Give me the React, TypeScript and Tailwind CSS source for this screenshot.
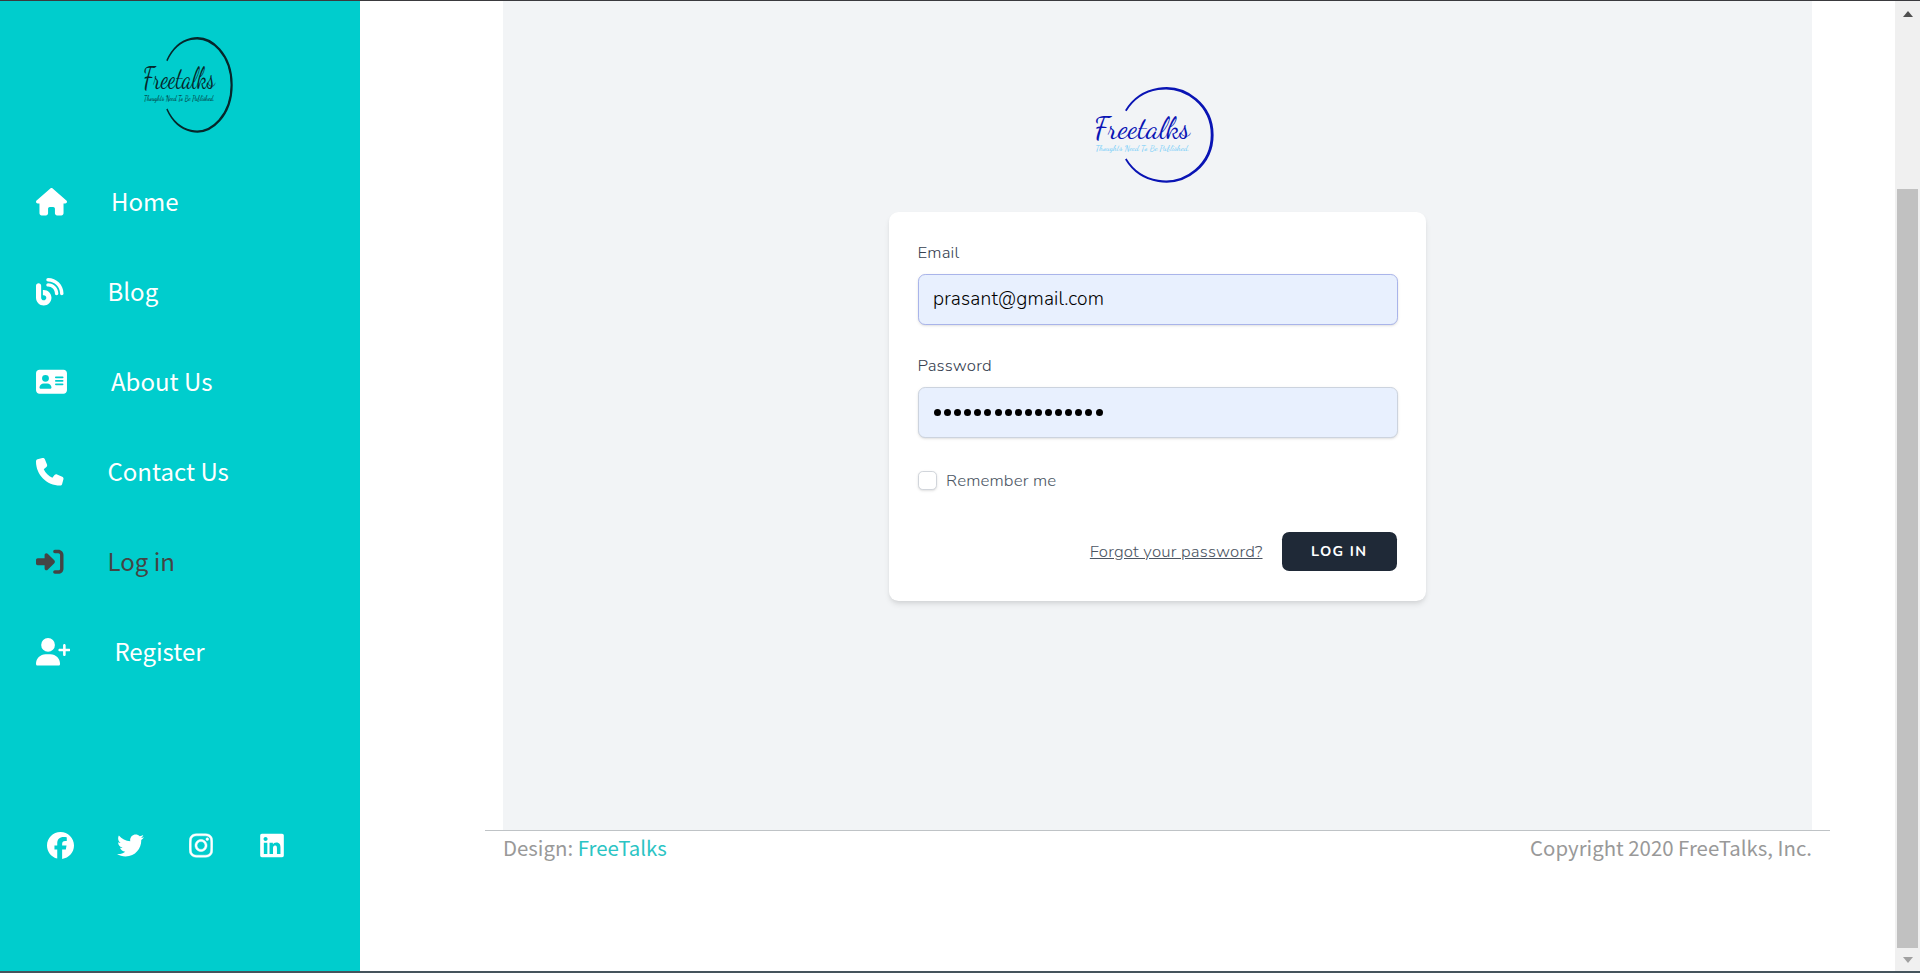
import React from "react";
import {
  FaHouse, FaBlog, FaAddressCard, FaPhone, FaRightToBracket, FaUserPlus,
  FaFacebook, FaTwitter, FaInstagram, FaLinkedin,
} from "react-icons/fa6";

const sans = "font-['Noto_Sans_CJK_SC','Noto_Sans',sans-serif]";
const form = "font-['Nunito','Noto_Sans',sans-serif]";
const script = "'Dancing Script', 'Lobster', 'Pacifico', 'Liberation Serif', serif";

function Logo({ className, ink, tag }: { className: string; ink: string; tag: string }) {
  return (
    <svg viewBox="0 0 120 98" preserveAspectRatio="none" className={`overflow-visible ${className}`}>
      <path d="M31.8 24.8A46.8 46.8 0 1 1 31.8 73A46.3 46.3 0 1 0 31.8 24.8Z" fill={ink} stroke={ink} strokeWidth="1.8" />
      <text x="0" y="52" textLength="96" lengthAdjust="spacingAndGlyphs" fill={ink} fontSize="29.5" fontFamily={script}>Freetalks</text>
      <text x="1.5" y="65" textLength="94" lengthAdjust="spacingAndGlyphs" fill={tag} fontSize="9" fontFamily={script}>Thoughts Need To Be Published.</text>
    </svg>
  );
}

const nav = [
  { label: "Home", Icon: FaHouse, size: "w-[31px]" },
  { label: "Blog", Icon: FaBlog, size: "w-[27.5px]" },
  { label: "About Us", Icon: FaAddressCard, size: "w-[31px]" },
  { label: "Contact Us", Icon: FaPhone, size: "w-[27.5px]" },
  { label: "Log in", Icon: FaRightToBracket, size: "w-[27.5px]", active: true },
  { label: "Register", Icon: FaUserPlus, size: "w-[34.4px]" },
];

function Sidebar() {
  return (
    <aside className="flex w-[360px] shrink-0 flex-col bg-[#00cdcd]">
      <Logo className="mt-[35px] ml-[143px] h-[98px] w-[90px] shrink-0" ink="#06262a" tag="#06262a" />
      <nav className="mt-[22px] flex flex-col pl-9">
        {nav.map(({ label, Icon, size, active }) => (
          <a key={label} className={`flex h-[90px] items-center gap-[44px] ${active ? "text-[#444]" : "text-white"}`}>
            <Icon className={`mt-[1.5px] h-[27.5px] shrink-0 ${size}`} />
            <span className="text-[24px] leading-8">{label}</span>
          </a>
        ))}
      </nav>
      <div className="mt-[136px] flex items-center pl-[47px] text-white">
        <FaFacebook className="mr-[43px] size-[27px]" />
        <FaTwitter className="mr-[45px] size-[27px]" />
        <FaInstagram className="mr-[47px] h-[27px] w-6 stroke-current stroke-[8]" />
        <FaLinkedin className="h-[27px] w-6" />
      </div>
    </aside>
  );
}

function LoginCard() {
  return (
    <form className={`mt-[28px] flex h-[389px] w-[537.6px] flex-col rounded-[9.6px] bg-white px-[28.8px] pt-[29px] shadow-[0_4px_6px_-1px_rgba(0,0,0,0.1),0_2px_4px_-1px_rgba(0,0,0,0.06)] ${form}`}>
      <label className="text-[16.8px] leading-6 font-light tracking-[0.15px] text-[#374151]">Email</label>
      <div className="mt-[9px] flex h-[51px] items-center rounded-[7.2px] border border-[#a9b4ea] bg-[#e8f0fe] px-[14.5px] text-[19.2px] font-light tracking-[0.16px] text-black shadow-sm">prasant@gmail.com</div>
      <label className="mt-[29px] text-[16.8px] leading-6 font-light tracking-[0.15px] text-[#374151]">Password</label>
      <div className="mt-[9px] flex h-[51px] items-center gap-[3.1px] rounded-[7.2px] border border-[#ccd3de] bg-[#e8f0fe] px-[15.5px] shadow-sm">
        {Array.from({ length: 17 }, (_, i) => (
          <span key={i} className="size-[7px] rounded-full bg-black" />
        ))}
      </div>
      <div className="mt-[30px] flex items-center gap-[9.6px]">
        <span className="size-[19px] rounded-[4.8px] border border-[#d1d5db] bg-white shadow-sm" />
        <span className="pt-px text-[16.8px] leading-6 font-light tracking-[0.15px] text-[#4b5563]">Remember me</span>
      </div>
      <div className="mt-[39px] mr-[0.8px] flex items-center justify-end gap-[19.2px]">
        <a className="text-[16.8px] leading-6 font-light tracking-[0.17px] text-[#4b5563] underline">Forgot your password?</a>
        <button type="button" className="h-[39px] w-[115px] rounded-[7.2px] bg-[#1f2937] text-[14.4px] font-bold tracking-[1.35px] text-white">LOG IN</button>
      </div>
    </form>
  );
}

export default function App() {
  return (
    <div className={`flex h-[973px] w-[1920px] overflow-hidden border-t border-b-2 border-t-[#3a3a3e] border-b-[#45545c] bg-white ${sans}`}>
      <Sidebar />
      <main className="flex flex-1 flex-col pl-[125px]">
        <div className="ml-[18px] flex h-[829px] w-[1309px] flex-col items-center bg-[#f2f4f6]">
          <Logo className="mt-[85px] mr-[7px] h-[98px] w-[120px] shrink-0" ink="#0a14b4" tag="#72cdf8" />
          <LoginCard />
        </div>
        <footer className="flex w-[1345px] justify-between border-t border-[#bfc3c6] px-[18px] pt-[2px] text-[20.4px] leading-[28px] text-[#999]">
          <span>Design: <span className="text-[#2bc4c4]">FreeTalks</span></span>
          <span>Copyright 2020 FreeTalks, Inc.</span>
        </footer>
      </main>
      <div className="flex w-[25px] flex-col items-center bg-[#f0f0f0]">
        <span className="mt-[10px] h-0 w-0 border-x-[5.5px] border-b-[6px] border-x-transparent border-b-[#505050]" />
        <span className="mt-[172px] h-[759px] w-[21px] bg-[#c1c1c1]" />
        <span className="mt-[9px] h-0 w-0 border-x-[5.5px] border-t-[6px] border-x-transparent border-t-[#a0a0a0]" />
      </div>
    </div>
  );
}
